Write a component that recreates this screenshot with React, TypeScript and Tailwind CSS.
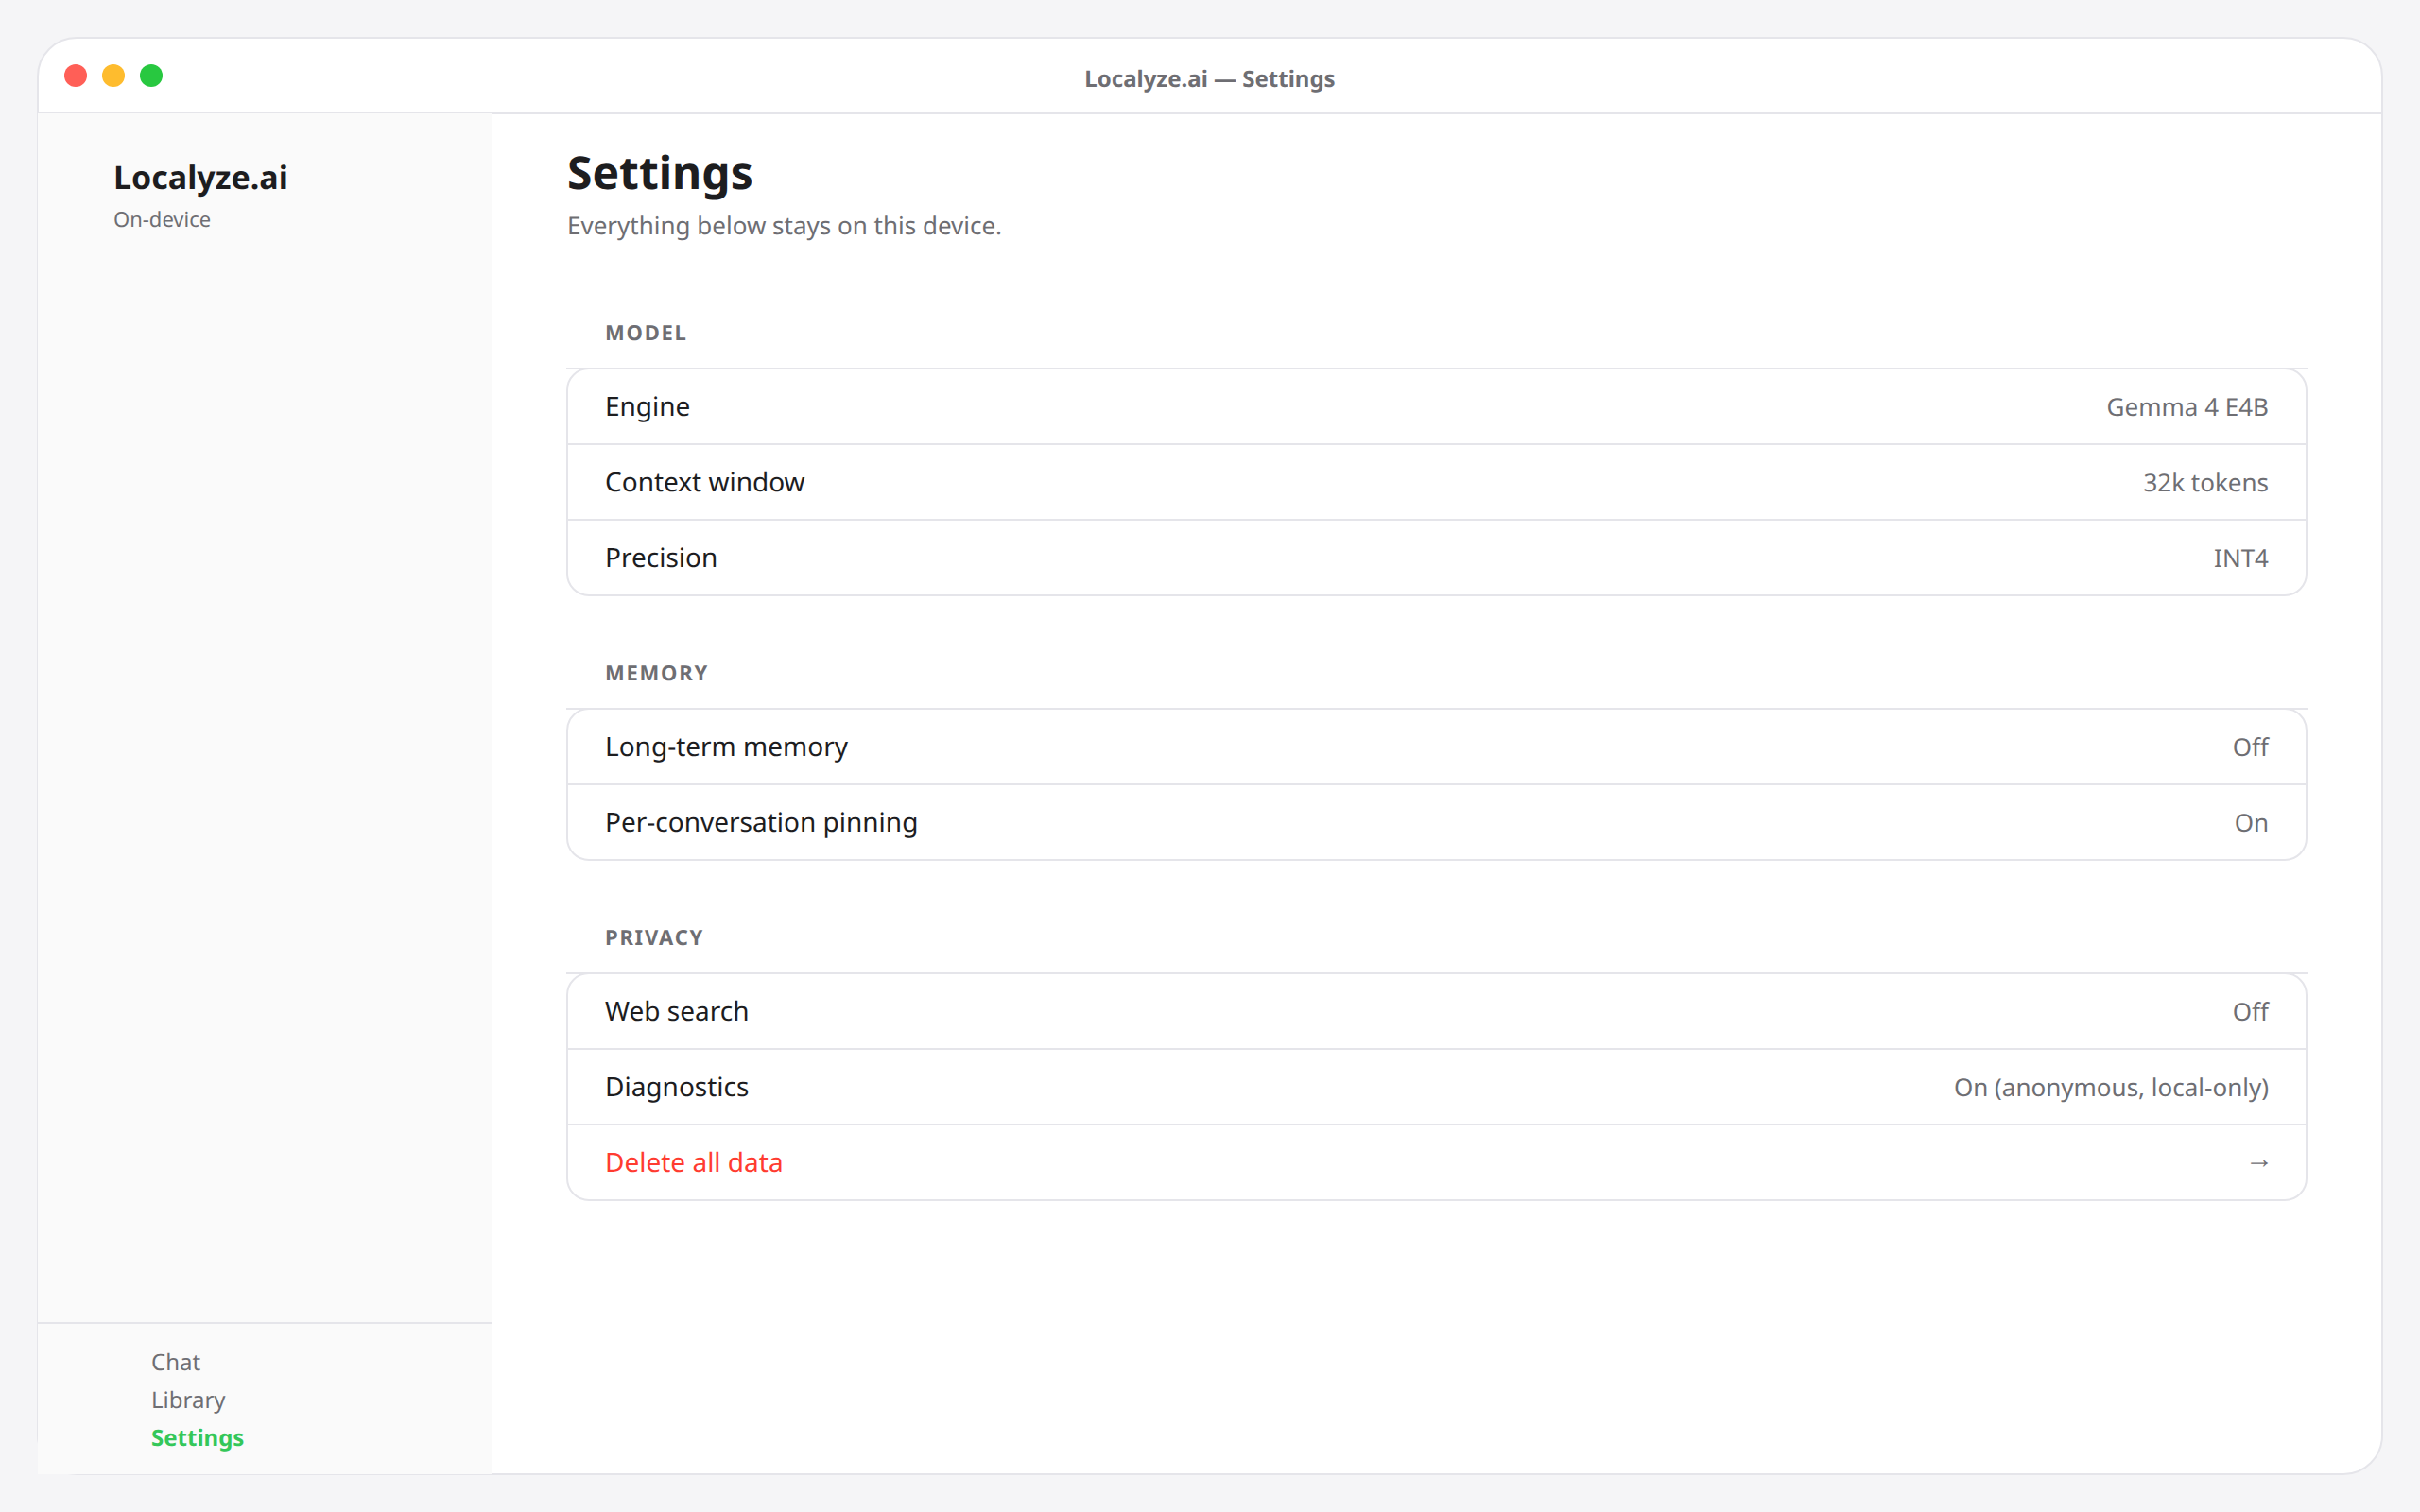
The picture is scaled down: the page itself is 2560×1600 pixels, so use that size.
const sections = [
  {
    title: "MODEL",
    rows: [
      { label: "Engine", value: "Gemma 4 E4B" },
      { label: "Context window", value: "32k tokens" },
      { label: "Precision", value: "INT4" },
    ],
  },
  {
    title: "MEMORY",
    rows: [
      { label: "Long-term memory", value: "Off" },
      { label: "Per-conversation pinning", value: "On" },
    ],
  },
  {
    title: "PRIVACY",
    rows: [
      { label: "Web search", value: "Off" },
      { label: "Diagnostics", value: "On (anonymous, local-only)" },
      { label: "Delete all data", value: "→", danger: true },
    ],
  },
];

const App = () => {
  return (
    <div className="h-[1600px] bg-[#f5f5f7] p-[39px] font-['Noto_Sans',sans-serif] [text-rendering:geometricPrecision]">
      <div className="flex h-[1522px] w-[2482px] flex-col rounded-[42px] border-2 border-[#e5e5ea] bg-white">
        <header className="grid h-[80px] shrink-0 grid-cols-[1fr_auto_1fr] items-center border-b-2 border-[#e5e5ea]">
          <div className="flex gap-4 pl-[27px]">
            <span className="h-6 w-6 rounded-full bg-[#ff5f57]" />
            <span className="h-6 w-6 rounded-full bg-[#febc2e]" />
            <span className="h-6 w-6 rounded-full bg-[#28c840]" />
          </div>
          <div className="pt-2 text-[24px] leading-[36px] font-bold text-[#6e6e73]">
            Localyze.ai — Settings
          </div>
          <div />
        </header>

        <div className="flex min-h-0 flex-1">
          <aside className="-mt-px -mb-px -ml-px flex w-[480px] shrink-0 flex-col justify-between bg-[#fafafa]">
            <div className="pt-[45px] pl-20">
              <div className="text-[34px] leading-[44px] font-bold text-[#1d1d1f]">
                Localyze.ai
              </div>
              <div className="mt-2 text-[22px] leading-[30px] text-[#6e6e73]">
                On-device
              </div>
            </div>
            <nav className="flex flex-col border-t-2 border-[#e5e5ea] pt-[21px] pb-[18px] pl-[120px] text-[24px] leading-[40px] text-[#6e6e73]">
              <span>Chat</span>
              <span>Library</span>
              <span className="font-bold text-[#34c759]">Settings</span>
            </nav>
          </aside>

          <main className="flex-1 pt-8 pr-[78px] pl-[79px]">
            <h1 className="pl-px text-[48px] leading-[60px] font-bold text-[#1d1d1f]">
              Settings
            </h1>
            <p className="mt-[5px] mb-[-1px] pl-px text-[26px] leading-[40px] text-[#6e6e73]">
              Everything below stays on this device.
            </p>

            <div className="mt-20 flex flex-col gap-[66px]">
              {sections.map(section => (
                <section key={section.title}>
                  <h2 className="border-b-2 border-[#e5e5ea] pt-px pb-[22px] pl-[41px] text-[22px] leading-[29px] font-bold tracking-[0.08em] text-[#6e6e73]">
                    {section.title}
                  </h2>
                  <div className="-mt-[2px] overflow-hidden rounded-[24px] border-2 border-[#e5e5ea]">
                    {section.rows.map((row, i) => (
                      <div
                        key={row.label}
                        className={`flex h-[80px] items-center justify-between pr-[39px] pl-10 last:h-[78px] ${
                          i < section.rows.length - 1
                            ? "border-b-2 border-[#e5e5ea]"
                            : ""
                        }`}
                      >
                        <span
                          className={`-ml-px text-[28px] ${
                            row.danger ? "text-[#ff3b30]" : "text-[#1d1d1f]"
                          }`}
                        >
                          {row.label}
                        </span>
                        <span
                          className={
                            row.danger
                              ? "-mt-[11px] -mr-[5px] text-[30px] text-[#6e6e73]"
                              : "text-[26px] text-[#6e6e73]"
                          }
                        >
                          {row.value}
                        </span>
                      </div>
                    ))}
                  </div>
                </section>
              ))}
            </div>
          </main>
        </div>
      </div>
    </div>
  );
};

export default App;
